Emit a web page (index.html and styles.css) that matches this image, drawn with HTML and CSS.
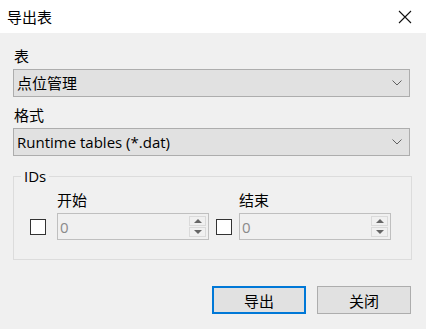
FILE: index.html
```html
<!DOCTYPE html>
<html lang="zh-CN">
  <head>
    <meta charset="UTF-8" />
    <meta name="viewport" content="width=device-width, initial-scale=1.0" />
    <title>导出表</title>
    <link rel="stylesheet" href="styles.css">
  </head>
  <body>
    <div class="dialog">
      <div class="titlebar">
        <span class="title">导出表</span>
        <svg class="close" width="14" height="14" viewBox="0 0 14 14">
          <path d="M1 1 L13 13 M13 1 L1 13" stroke="#111" stroke-width="1.1" fill="none" />
        </svg>
      </div>
      <div class="content">
        <label class="field-label">表</label>
        <div class="combo">
          <span>点位管理</span>
          <svg class="chevron" width="10" height="6" viewBox="0 0 10 6">
            <path d="M0.5 0.5 L5 5 L9.5 0.5" stroke="#606060" stroke-width="1" fill="none" />
          </svg>
        </div>
        <label class="field-label">格式</label>
        <div class="combo">
          <span class="latin">Runtime tables (*.dat)</span>
          <svg class="chevron" width="10" height="6" viewBox="0 0 10 6">
            <path d="M0.5 0.5 L5 5 L9.5 0.5" stroke="#606060" stroke-width="1" fill="none" />
          </svg>
        </div>
        <fieldset class="group">
          <legend class="latin">IDs</legend>
          <div class="range">
            <div class="range-item start">
              <span class="check"></span>
              <div class="spin-col">
                <label class="spin-label">开始</label>
                <div class="spin">
                  <span class="spin-value">0</span>
                  <div class="spin-buttons">
                    <span class="spin-btn"><i class="arrow up"></i></span>
                    <span class="spin-btn"><i class="arrow down"></i></span>
                  </div>
                </div>
              </div>
            </div>
            <div class="range-item end">
              <span class="check"></span>
              <div class="spin-col">
                <label class="spin-label">结束</label>
                <div class="spin">
                  <span class="spin-value">0</span>
                  <div class="spin-buttons">
                    <span class="spin-btn"><i class="arrow up"></i></span>
                    <span class="spin-btn"><i class="arrow down"></i></span>
                  </div>
                </div>
              </div>
            </div>
          </div>
        </fieldset>
        <div class="actions">
          <button class="btn default">导出</button>
          <button class="btn">关闭</button>
        </div>
      </div>
    </div>
  </body>
</html>
```

FILE: styles.css
```css
/* Reset */
* {
  margin: 0;
  padding: 0;
  box-sizing: border-box;
}

body {
  font-family: "Segoe UI", "Noto Sans CJK SC", "Noto Sans", sans-serif;
  font-size: 15px;
  color: #000;
  background-color: #f0f0f0;
  width: 426px;
  height: 329px;
  overflow: hidden;
}

.latin {
  font-family: "Open Sans", "Noto Sans", sans-serif;
}

.dialog {
  display: flex;
  flex-direction: column;
  height: 100%;
}

/* Title bar */
.titlebar {
  height: 33px;
  background-color: #fff;
  display: flex;
  align-items: center;
  justify-content: space-between;
  padding: 0 14px 0 7px;
}

.title {
  font-size: 15px;
  line-height: 20px;
}

/* Form area */
.content {
  flex: 1;
  padding: 13px 15px 0 13px;
  display: flex;
  flex-direction: column;
}

.field-label {
  display: block;
  line-height: 20px;
  margin-left: 1px;
  margin-bottom: 3px;
}

.combo {
  height: 28px;
  width: 397px;
  border: 1px solid #adadad;
  background-color: #e1e1e1;
  display: flex;
  align-items: center;
  justify-content: space-between;
  padding: 0 7px 0 3px;
  margin-bottom: 8px;
}

.combo span {
  line-height: 20px;
}

.chevron {
  flex: none;
}

/* Group box */
.group {
  border: 1px solid #dcdcdc;
  width: 399px;
  height: 94px;
  margin-top: 2px;
  padding: 0;
}

.group legend {
  margin-left: 7px;
  padding: 0 3px;
  line-height: 20px;
}

.range {
  display: flex;
  gap: 7px;
  margin-top: 4px;
  padding-left: 16px;
}

.range-item {
  display: flex;
  align-items: flex-end;
  gap: 11px;
}

.range-item.end {
  gap: 7px;
}

.check {
  width: 16px;
  height: 16px;
  border: 1px solid #333;
  background-color: #fff;
  margin-bottom: 5px;
}

.spin-label {
  display: block;
  line-height: 20px;
  margin-bottom: 3px;
}

.spin {
  width: 152px;
  height: 27px;
  border: 1px solid #bfbfbf;
  display: flex;
  align-items: center;
  justify-content: space-between;
  padding: 0 2px 0 2px;
}

.spin-value {
  font-family: "Open Sans", "Noto Sans", sans-serif;
  color: #8a8a8a;
  line-height: 20px;
}

.spin-buttons {
  display: flex;
  flex-direction: column;
  gap: 1px;
}

.spin-btn {
  width: 17px;
  height: 10px;
  border: 1px solid #dadada;
  display: flex;
  align-items: center;
  justify-content: center;
}

.arrow {
  width: 0;
  height: 0;
  border-left: 4px solid transparent;
  border-right: 4px solid transparent;
}

.arrow.up {
  border-bottom: 4px solid #666;
}

.arrow.down {
  border-top: 4px solid #666;
}

/* Buttons */
.actions {
  display: flex;
  justify-content: flex-end;
  gap: 11px;
  margin-top: 26px;
  width: 398px;
}

.btn {
  width: 94px;
  height: 28px;
  font-family: inherit;
  font-size: 15px;
  background-color: #e1e1e1;
  border: 1px solid #adadad;
  color: #000;
}

.btn.default {
  border: 2px solid #0078d7;
}
```
